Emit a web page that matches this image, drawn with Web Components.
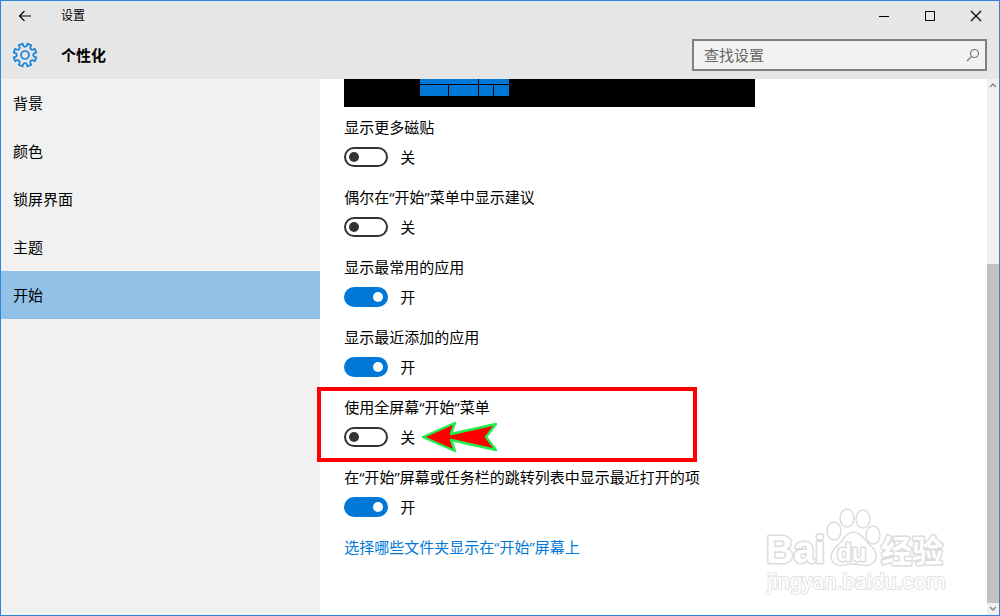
<!DOCTYPE html>
<html lang="zh-CN">
<head>
<meta charset="utf-8">
<title>设置</title>
<style>
  html, body { margin: 0; height: 100%; }
  body {
    font: 15px/20px "Open Sans", "Noto Sans CJK SC", sans-serif;
    color: #000;
    --accent: #0078d7;
  }
</style>
</head>
<body>
<settings-window>
  <title-bar slot="header">设置</title-bar>
  <page-heading slot="header">个性化</page-heading>
  <side-nav slot="nav">
    <nav-item>背景</nav-item>
    <nav-item>颜色</nav-item>
    <nav-item>锁屏界面</nav-item>
    <nav-item>主题</nav-item>
    <nav-item current>开始</nav-item>
  </side-nav>
  <start-preview></start-preview>
  <toggle-setting label="显示更多磁贴"></toggle-setting>
  <toggle-setting label="偶尔在“开始”菜单中显示建议"></toggle-setting>
  <toggle-setting label="显示最常用的应用" on></toggle-setting>
  <toggle-setting label="显示最近添加的应用" on></toggle-setting>
  <toggle-setting label="使用全屏幕“开始”菜单"><callout-mark></callout-mark></toggle-setting>
  <toggle-setting label="在“开始”屏幕或任务栏的跳转列表中显示最近打开的项" on></toggle-setting>
  <settings-link href="#folders">选择哪些文件夹显示在“开始”屏幕上</settings-link>
  <scroll-rail slot="rail"></scroll-rail>
  <site-watermark slot="overlay"></site-watermark>
</settings-window>

<script>
const define = (name, html, setup) => {
  const template = document.createElement('template');
  template.innerHTML = html;
  customElements.define(name, class extends HTMLElement {
    constructor() {
      super();
      this.attachShadow({ mode: 'open' }).append(template.content.cloneNode(true));
    }
    connectedCallback() { if (setup) setup(this, this.shadowRoot); }
  });
};

define('settings-window', `
  <style>
    :host { display: grid; grid-template-rows: auto 1fr; min-height: 100vh; box-sizing: border-box;
            border: 1px solid #2b88d8; background: #fff; position: relative; }
    header { background: #e6e6e6; }
    .body { display: grid; grid-template-columns: 32% 1fr 12px; }
    main { display: flex; flex-direction: column; gap: 20px; padding: 0 24px 24px; }
    ::slotted(start-preview) { margin-bottom: -10px; }
  </style>
  <header><slot name="header"></slot></header>
  <div class="body">
    <slot name="nav"></slot>
    <main><slot></slot></main>
    <slot name="rail"></slot>
  </div>
  <slot name="overlay"></slot>`);

define('title-bar', `
  <style>
    :host { display: flex; align-items: center; height: 30px; font-size: 12px; }
    button { border: 0; padding: 0; background: none; width: 46px; height: 30px;
             display: grid; place-items: center; color: #000; }
    .back { width: 48px; }
    .title { flex: 1; padding-left: 12px; }
    svg { fill: none; stroke: currentColor; }
  </style>
  <button class="back" aria-label="Back"><svg width="14" height="14" stroke-width="1.1"><path d="M13 7H1.500M6.500 2 1.500 7 6.500 12"/></svg></button>
  <span class="title"><slot></slot></span>
  <button aria-label="Minimize"><svg width="12" height="12"><path d="M1 6.500h10"/></svg></button>
  <button aria-label="Maximize"><svg width="12" height="12"><path d="M1.500 1.500h9v9h-9z"/></svg></button>
  <button aria-label="Close"><svg width="12" height="12" stroke-width="1.2"><path d="M1 1l10 10M11 1 1 11"/></svg></button>`);

define('page-heading', `
  <style>
    :host { display: flex; align-items: center; height: 48px; padding: 0 12px; }
    .gear { width: 48px; display: flex; }
    .gear svg { fill: none; stroke: #1a83da; stroke-width: 1.7; stroke-linejoin: round; overflow: visible; }
    h1 { flex: 1; margin: 0; font: inherit; font-weight: bold; }
    .search { display: flex; align-items: center; box-sizing: border-box; width: 295px; height: 32px;
              border: 2px solid #808080; background: #f2f2f2; padding-left: 10px; }
    input { flex: 1; min-width: 0; border: 0; padding: 0; outline: 0; background: none; font: inherit; height: 28px; }
    input::placeholder { color: #666; opacity: 1; }
    button { border: 0; padding: 0; background: none; width: 24px; height: 28px; display: grid; place-items: center; }
    button svg { fill: none; stroke: #777; stroke-width: 1.2; }
  </style>
  <span class="gear"><svg width="24" height="24" viewBox="-12 -12 24 24" aria-hidden="true"><path/><circle r="4"/></svg></span>
  <h1><slot></slot></h1>
  <div class="search">
    <input type="text" placeholder="查找设置" aria-label="查找设置">
    <button aria-label="Search"><svg width="14" height="14"><circle cx="8.500" cy="5.500" r="4"/><path d="M5.600 8.400 1 13"/></svg></button>
  </div>`,
(host, root) => {
  // Eight teeth joined by concave valleys; the first valley points straight up.
  const at = (deg, r) => {
    const a = deg * Math.PI / 180;
    return (r * Math.sin(a)).toFixed(2) + ' ' + (-r * Math.cos(a)).toFixed(2);
  };
  let d = 'M' + at(-12, 11.6);
  for (let k = 0; k < 8; k++) {
    const m = k * 45;
    d += 'C' + at(m - 14, 7.4) + ' ' + at(m + 14, 7.4) + ' ' + at(m + 12, 11.6) + 'L' + at(m + 33, 11.6);
  }
  root.querySelector('.gear path').setAttribute('d', d + 'Z');
});

define('side-nav', `
  <style>:host { display: block; background: #f1f1f1; } nav { display: flex; flex-direction: column; }</style>
  <nav><slot></slot></nav>`);

define('nav-item', `
  <style>
    :host { display: block; }
    :host([current]) { background: #91c1e7; }
    a { display: flex; align-items: center; height: 48px; padding: 0 12px; color: inherit; text-decoration: none; }
  </style>
  <a href="#"><slot></slot></a>`);

define('start-preview', `
  <style>:host { display: block; max-width: 411px; height: 28px; background: #000; } svg { display: block; fill: var(--accent); }</style>
  <svg width="168" height="28" aria-hidden="true">
    <path d="M76 0h58v5H76zM135 0h30v5h-30zM76 6h28v11H76zM105 6h29v11h-29zM135 6h14v11h-14zM150 6h15v11h-15z"/>
  </svg>`);

define('toggle-setting', `
  <style>
    :host { display: flex; flex-direction: column; gap: 10px; position: relative; }
    .row { display: flex; align-items: center; gap: 12px; height: 20px; }
    input { appearance: none; margin: 0; width: 44px; height: 20px; box-sizing: border-box; border: 2px solid #333;
            border-radius: 10px; display: flex; align-items: center; padding: 0 3px; }
    input::before { content: ""; width: 10px; height: 10px; border-radius: 50%; background: #333; }
    input:checked { background: var(--accent); border-color: var(--accent); justify-content: flex-end; }
    input:checked::before { background: #fff; }
  </style>
  <label for="switch"></label>
  <div class="row"><input id="switch" type="checkbox" role="switch"><output for="switch"></output></div>
  <slot></slot>`,
(host, root) => {
  const input = root.querySelector('input');
  const show = () => { root.querySelector('output').textContent = input.checked ? '开' : '关'; };
  root.querySelector('label').textContent = host.getAttribute('label');
  input.checked = host.hasAttribute('on');
  input.onchange = show;
  show();
});

define('callout-mark', `
  <style>
    :host { position: absolute; left: -27px; top: -10px; width: 380px; height: 75px; box-sizing: border-box;
            border: 4px solid #f00; pointer-events: none; }
    svg { position: absolute; left: 100px; top: 27px; }
  </style>
  <svg width="80" height="36" fill="#f00" stroke="#1cf04c" stroke-width="2.4" stroke-linejoin="round" aria-hidden="true">
    <path d="M2 19 34 5 30 16 75 6 65 19 75 32 30 22 34 33Z"/>
  </svg>`);

define('settings-link', `
  <style>:host { display: block; } a { color: var(--accent); text-decoration: none; }</style>
  <a><slot></slot></a>`,
(host, root) => { root.querySelector('a').href = host.getAttribute('href'); });

define('scroll-rail', `
  <style>
    :host { display: flex; flex-direction: column; background: #f0f0f0; }
    button { border: 0; padding: 0; background: none; width: 12px; height: 12px; display: grid; place-items: center; }
    svg { fill: none; stroke: #888; stroke-width: 1.5; }
    .before { flex: 173; }
    .thumb { flex: 339; background: #c2c2c2; }
  </style>
  <button aria-label="Scroll up"><svg width="8" height="6"><path d="M1 5l3-3 3 3"/></svg></button>
  <div class="before"></div><div class="thumb"></div>
  <button aria-label="Scroll down"><svg width="8" height="6"><path d="M1 1l3 3 3-3"/></svg></button>`);

define('site-watermark', `
  <style>
    :host { position: absolute; right: 49px; bottom: 15px; pointer-events: none; }
    svg { display: block; fill: #fff; stroke: #dcdcdc; stroke-width: 1.5; stroke-linejoin: round; overflow: visible; }
    text { font-family: "Liberation Sans", "Noto Sans CJK SC", sans-serif; font-weight: bold; paint-order: stroke; stroke-width: 3; }
    .url { font-family: Roboto, sans-serif; font-size: 22px; font-weight: normal; stroke-width: 2; stroke: #e2e2e2; }
  </style>
  <svg width="184" height="92" role="img">
    <text x="0" y="55" font-size="38">Bai</text>
    <ellipse cx="68" cy="23" rx="7" ry="9"/><ellipse cx="81" cy="10" rx="7" ry="9"/>
    <ellipse cx="97" cy="11" rx="7" ry="9"/><ellipse cx="107" cy="27" rx="7" ry="9"/>
    <path d="M87 24C95 24 98 32 104 37C111 43 112 51 107 55C101 60 95 56 87 56C79 56 74 60 68 55C62 50 66 42 72 37C77 33 80 24 87 24Z"/>
    <text x="71" y="53" font-size="24">du</text>
    <text x="115" y="54" font-size="31">经验</text>
    <text class="url" x="1" y="81">jingyan.baidu.com</text>
  </svg>`);
</script>
</body>
</html>
